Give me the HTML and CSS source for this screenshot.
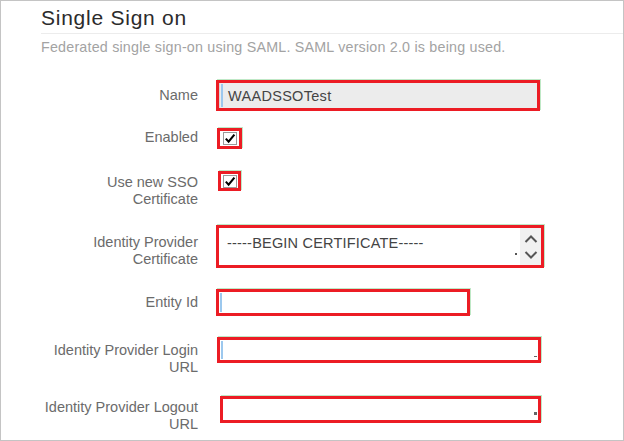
FILE: index.html
```html
<!DOCTYPE html>
<html lang="en">
<head>
<meta charset="utf-8">
<title>Single Sign on</title>
<link rel="stylesheet" href="styles.css">
</head>
<body>
<div class="panel">
  <h1 class="title">Single Sign on</h1>
  <p class="subtitle">Federated single sign-on using SAML. SAML version 2.0 is being used.</p>

  <div class="form">
    <div class="row row-name">
      <label class="lbl">Name</label>
      <div class="frame frame-name">
        <div class="field field-readonly"><span class="caret"></span>WAADSSOTest</div>
      </div>
    </div>

    <div class="row row-enabled">
      <label class="lbl">Enabled</label>
      <div class="frame frame-check">
        <span class="check">
          <svg viewBox="0 0 12 11" width="12" height="11"><path d="M1.8 5.6 L4.6 8.6 L10.4 1.6" fill="none" stroke="#000" stroke-width="2.1"/></svg>
        </span>
      </div>
    </div>

    <div class="row row-sso">
      <label class="lbl">Use new SSO<br>Certificate</label>
      <div class="frame frame-check frame-check-b">
        <span class="check">
          <svg viewBox="0 0 12 11" width="12" height="11"><path d="M1.8 5.6 L4.6 8.6 L10.4 1.6" fill="none" stroke="#000" stroke-width="2.1"/></svg>
        </span>
      </div>
    </div>

    <div class="row row-cert">
      <label class="lbl">Identity Provider<br>Certificate</label>
      <div class="frame frame-cert">
        <div class="area">
          <span class="area-text">-----BEGIN CERTIFICATE-----</span>
          <span class="dot"></span>
          <span class="scroll">
            <svg viewBox="0 0 14 8" width="14" height="8"><path d="M1.5 7 L7 1.5 L12.5 7" fill="none" stroke="#555" stroke-width="2"/></svg>
            <svg viewBox="0 0 14 8" width="14" height="8"><path d="M1.5 1 L7 6.5 L12.5 1" fill="none" stroke="#555" stroke-width="2"/></svg>
          </span>
        </div>
      </div>
    </div>

    <div class="row row-entity">
      <label class="lbl">Entity Id</label>
      <div class="frame frame-entity">
        <div class="field"><span class="caret"></span></div>
      </div>
    </div>

    <div class="row row-login">
      <label class="lbl">Identity Provider Login<br>URL</label>
      <div class="frame frame-login">
        <div class="field"><span class="caret"></span><span class="tick"></span></div>
      </div>
    </div>

    <div class="row row-logout">
      <label class="lbl">Identity Provider Logout<br>URL</label>
      <div class="frame frame-logout">
        <div class="field"><span class="tick tick-sq"></span></div>
      </div>
    </div>
  </div>
</div>
</body>
</html>
```

FILE: styles.css
```css
* {
  box-sizing: border-box;
}

html,
body {
  margin: 0;
  padding: 0;
  background: #ffffff;
}

body {
  font-family: "Liberation Sans", Arial, sans-serif;
}

.panel {
  width: 624px;
  height: 441px;
  border: 1px solid #c4c4c4;
  padding: 4px 0 0 40px;
  overflow: hidden;
}

.title {
  margin: 0;
  font-size: 21px;
  line-height: 26px;
  font-weight: normal;
  color: #2b2b2b;
  padding-bottom: 2px;
  border-bottom: 1px solid #ececec;
  letter-spacing: 0.75px;
}

.subtitle {
  margin: 5px 0 0;
  font-size: 14.3px;
  line-height: 16px;
  color: #a3a3a3;
  letter-spacing: 0.2px;
}

.form {
  display: flex;
  flex-direction: column;
}

.row {
  display: flex;
  align-items: flex-start;
  gap: 18px;
}

.lbl {
  width: 157px;
  flex: none;
  text-align: right;
  font-size: 14.5px;
  line-height: 17px;
  color: #6b6b6b;
}

.row-name { margin-top: 25px; }
.row-name .lbl { padding-top: 7px; }

.row-enabled { margin-top: 17px; }
.row-enabled .lbl { padding-top: 1px; }

.row-sso { margin-top: 22px; }
.row-sso .lbl { padding-top: 3px; }

.row-cert { margin-top: 17px; }
.row-cert .lbl { padding-top: 9px; }

.row-entity { margin-top: 21px; }
.row-entity .lbl { padding-top: 5px; }

.row-login { margin-top: 21px; }
.row-login .lbl { padding-top: 5px; }

.row-logout { margin-top: 20px; }
.row-logout .lbl { padding-top: 3px; }

.frame {
  border: 3px solid #ec1c24;
  box-shadow: 1px -1px 0 #bfe8c6;
  flex: none;
}

.frame-name {
  width: 324px;
  height: 31px;
}

.frame-check {
  width: 25px;
  height: 21px;
  margin-left: 1px;
  display: flex;
  align-items: center;
  justify-content: center;
}

.frame-check-b {
  width: 23px;
  height: 20px;
  margin-left: 2px;
}

.frame-cert {
  width: 328px;
  height: 43px;
}

.frame-entity {
  width: 254px;
  height: 27px;
}

.frame-login {
  width: 324px;
  height: 26px;
  margin-left: 1px;
}

.frame-logout {
  width: 321px;
  height: 27px;
  margin-left: 4px;
}

.field {
  position: relative;
  height: 100%;
  display: flex;
  align-items: center;
  padding-left: 8px;
  font-size: 14.5px;
  color: #444444;
  background: #ffffff;
  letter-spacing: 0.3px;
}

.field-readonly {
  background: #ececec;
  border-left: 1px solid #d6d6d6;
}

.caret {
  position: absolute;
  left: 1px;
  top: 1px;
  bottom: 1px;
  width: 2px;
  background: #9cc8ee;
}

.tick {
  position: absolute;
  right: 1px;
  bottom: 3px;
  width: 3px;
  height: 1px;
  background: #666666;
}

.tick-sq {
  height: 3px;
  bottom: 5px;
}

.check {
  width: 14px;
  height: 13px;
  border: 1px solid #9a9a9a;
  background: #ffffff;
  display: flex;
  align-items: center;
  justify-content: center;
}

.check svg {
  display: block;
}

.area {
  position: relative;
  height: 100%;
  background: #ffffff;
  display: flex;
}

.area-text {
  flex: 1;
  padding: 7px 0 0 8px;
  font-size: 14.5px;
  line-height: 17px;
  color: #444444;
  letter-spacing: 0.2px;
}

.dot {
  position: absolute;
  right: 24px;
  top: 25px;
  width: 2px;
  height: 2px;
  background: #555555;
}

.scroll {
  width: 21px;
  background: #f1f1f1;
  display: flex;
  flex-direction: column;
  align-items: center;
  justify-content: space-between;
  padding: 7px 0 6px;
}

.scroll svg {
  display: block;
}
```
